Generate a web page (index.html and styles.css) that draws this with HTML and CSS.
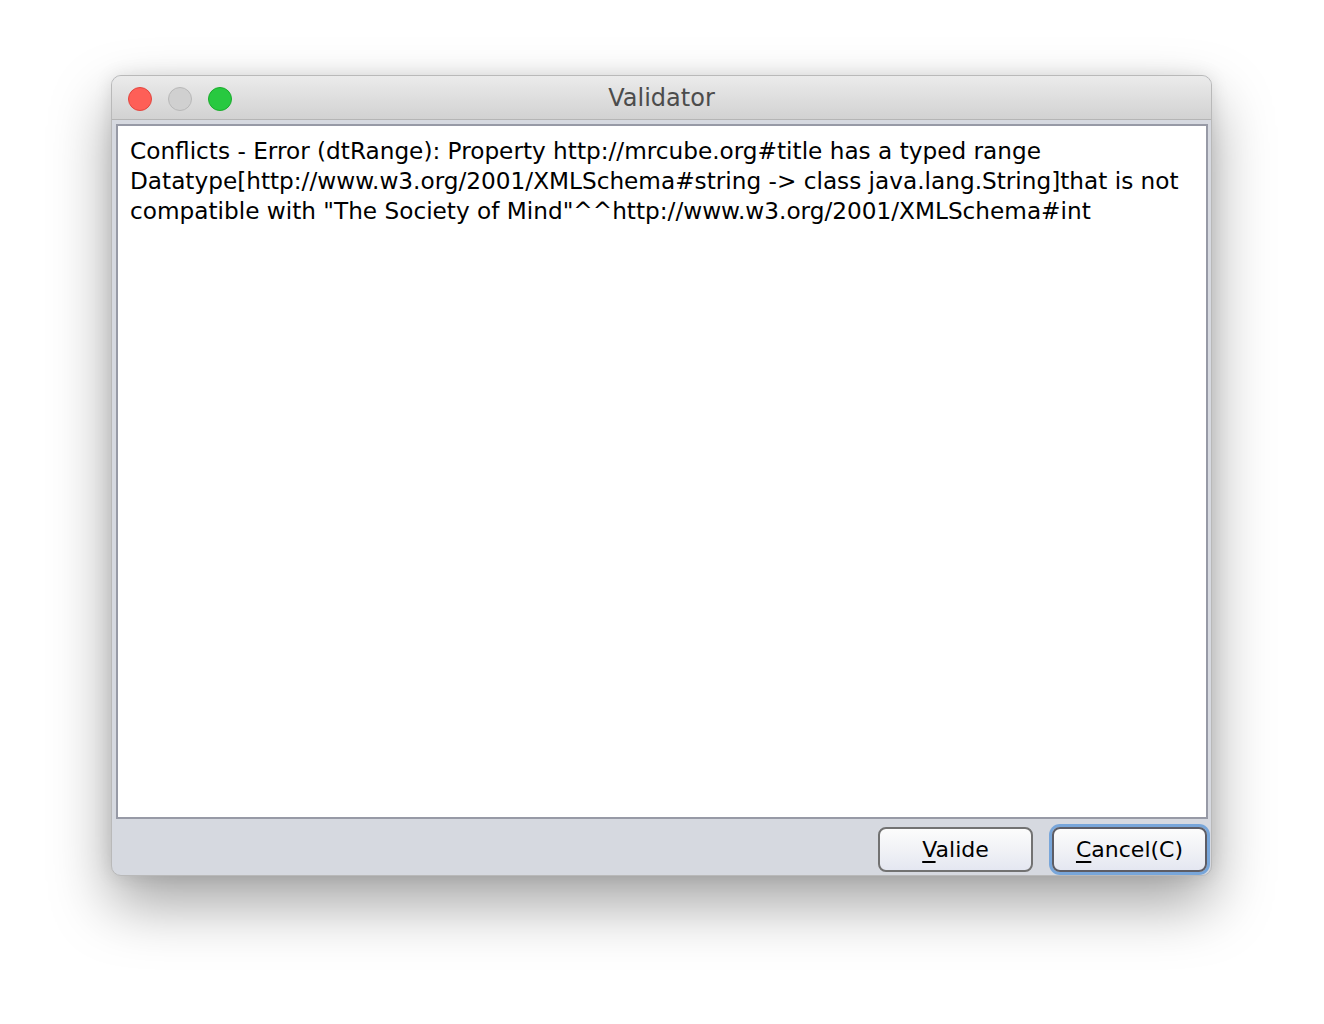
FILE: index.html
```html
<!DOCTYPE html>
<html>
<head>
<meta charset="utf-8">
<link rel="stylesheet" href="styles.css">
</head>
<body>
<div class="window">
  <div class="titlebar">
    <div class="lights">
      <span class="light red"></span>
      <span class="light gray"></span>
      <span class="light green"></span>
    </div>
    <div class="title">Validator</div>
  </div>
  <div class="content">
    <div class="textarea">Conflicts - Error (dtRange): Property http://mrcube.org#title has a typed range<br>Datatype[http://www.w3.org/2001/XMLSchema#string -&gt; class java.lang.String]that is not<br>compatible with "The Society of Mind"^^http://www.w3.org/2001/XMLSchema#int</div>
    <div class="buttons">
      <button class="btn"><u>V</u>alide</button>
      <button class="btn focus"><u>C</u>ancel(C)</button>
    </div>
  </div>
</div>
</body>
</html>
```
FILE: styles.css
```css
html, body {
  margin: 0;
  padding: 0;
  background: #ffffff;
}
body {
  width: 1324px;
  height: 1024px;
  padding: 75px 0 0 111px;
  box-sizing: border-box;
  font-family: "DejaVu Sans", "Liberation Sans", sans-serif;
}
.window {
  width: 1101px;
  height: 801px;
  box-sizing: border-box;
  border: 1px solid #b9b9b9;
  border-radius: 10px;
  background: #d6d9e0;
  box-shadow: 0 28px 60px rgba(0,0,0,0.36), 0 0 18px rgba(0,0,0,0.10);
  display: flex;
  flex-direction: column;
  overflow: hidden;
}
.titlebar {
  height: 43px;
  flex: none;
  border-bottom: 1px solid #b5b5b5;
  background: linear-gradient(#ebebeb, #d2d2d2);
  display: flex;
  align-items: center;
  position: relative;
}
.lights {
  display: flex;
  gap: 16px;
  padding-left: 16px;
  padding-top: 2px;
}
.light {
  width: 24px;
  height: 24px;
  border-radius: 50%;
  box-sizing: border-box;
}
.red { background: #fe5f57; border: 1px solid #e2463f; }
.gray { background: #d0d0d0; border: 1px solid #b8b8b8; }
.green { background: #28c940; border: 1px solid #1aac2c; }
.title {
  position: absolute;
  left: 0;
  right: 0;
  top: 1px;
  bottom: 0;
  display: flex;
  align-items: center;
  justify-content: center;
  font-size: 24px;
  color: #4c4c4c;
}
.content {
  flex: 1;
  display: flex;
  flex-direction: column;
  padding: 4px 3px 0 4px;
}
.textarea {
  height: 695px;
  box-sizing: border-box;
  background: #ffffff;
  border: 2px solid #979aa6;
  padding: 10px 12px;
  font-size: 23.2px;
  line-height: 30px;
  color: #000;
  white-space: nowrap;
}
.buttons {
  flex: 1;
  display: flex;
  justify-content: flex-end;
  align-items: center;
  gap: 19px;
  padding-right: 1px;
  padding-top: 5px;
}
.btn {
  width: 155px;
  height: 45px;
  box-sizing: border-box;
  border: 2px solid #727272;
  border-radius: 8px;
  background: linear-gradient(#fcfcfc, #f1f2f6 50%, #e4e7f1);
  font-family: "DejaVu Sans", "Liberation Sans", sans-serif;
  font-size: 22px;
  color: #000;
  padding: 0;
}
.btn u {
  text-decoration-thickness: 2px;
  text-underline-offset: 4px;
}
.focus {
  box-shadow: 0 0 0 3px #78a6da;
  border-color: #5d5d66;
}
```
